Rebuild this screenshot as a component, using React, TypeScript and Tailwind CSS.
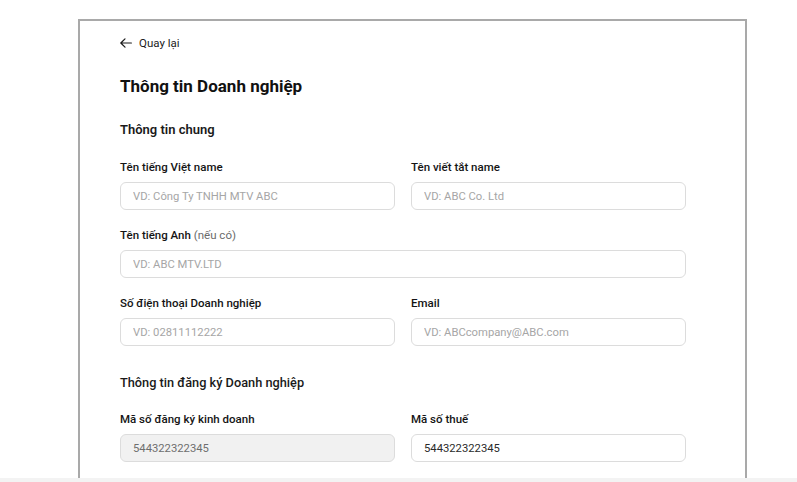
type FieldProps = {
  label: string;
  hint?: string;
  placeholder?: string;
  value?: string;
  disabled?: boolean;
  className?: string;
};

const Field = ({ label, hint, placeholder, value, disabled, className }: FieldProps) => {
  return (
    <div className={className}>
      <label className="block text-[11.5px] leading-4 font-medium text-[#141414]">
        {label}
        {hint && <span className="font-normal text-[#6b6b6b]"> {hint}</span>}
      </label>
      <input
        readOnly
        disabled={disabled}
        placeholder={placeholder}
        defaultValue={value}
        className={`mt-[7px] block w-full h-[28px] rounded-md border border-[#dcdcdc] px-3 text-[11.25px] outline-none placeholder:text-[#a6a6a6] ${
          disabled ? "bg-[#f1f1f1] text-[#6e6e6e]" : "bg-white text-[#2a2a2a]"
        }`}
      />
    </div>
  );
};

const App = () => {
  return (
    <div className="h-[482px] w-[797px] overflow-hidden bg-white flex flex-col font-['Roboto',sans-serif]">
      <div className="flex-1 overflow-hidden pt-[19px] pl-[78px]">
        <div className="w-[669px] h-full border-t-2 border-x-2 border-[#a9a9a9] pl-[40px] pt-[14px]">
          <div className="w-[566px]">
            {/* Back link */}
            <a className="flex items-center gap-[7px] text-[11.5px] leading-4 text-[#1a1a1a]" href="#">
              <svg width="12" height="10" viewBox="0 0 12 10" fill="none" stroke="currentColor" strokeWidth="1.2" strokeLinecap="round" strokeLinejoin="round">
                <path d="M11.4 5H0.8M5 0.8 0.8 5 5 9.2" />
              </svg>
              <span>Quay lại</span>
            </a>

            <h1 className="mt-[23px] text-[17px] leading-6 font-bold text-[#111]">Thông tin Doanh nghiệp</h1>

            <h2 className="mt-[22px] text-[13px] leading-5 font-semibold text-[#1a1a1a]">Thông tin chung</h2>

            <div className="mt-[19px] grid grid-cols-2 gap-x-4">
              <Field label="Tên tiếng Việt name" placeholder="VD: Công Ty TNHH MTV ABC" />
              <Field label="Tên viết tắt name" placeholder="VD: ABC Co. Ltd" />
            </div>

            <Field
              className="mt-[17px]"
              label="Tên tiếng Anh"
              hint="(nếu có)"
              placeholder="VD: ABC MTV.LTD"
            />

            <div className="mt-[17px] grid grid-cols-2 gap-x-4">
              <Field label="Số điện thoại Doanh nghiệp" placeholder="VD: 02811112222" />
              <Field label="Email" placeholder="VD: ABCcompany@ABC.com" />
            </div>

            <h2 className="mt-[27px] text-[12.75px] leading-5 font-medium text-[#1a1a1a]">
              Thông tin đăng ký Doanh nghiệp
            </h2>

            <div className="mt-[18px] grid grid-cols-2 gap-x-4">
              <Field label="Mã số đăng ký kinh doanh" value="544322322345" disabled />
              <Field label="Mã số thuế" value="544322322345" />
            </div>
          </div>
        </div>
      </div>
      <div className="h-[4px] bg-[#f3f3f3]" />
    </div>
  );
};

export default App;
